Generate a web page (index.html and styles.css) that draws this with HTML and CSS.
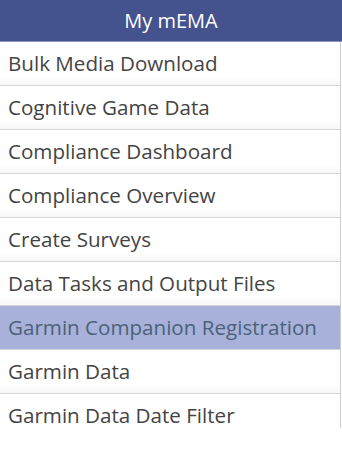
FILE: index.html
```html
<!DOCTYPE html>
<html>

<head>
    <meta charset="UTF-8">
    <meta name="viewport" content="width=device-width, initial-scale=1.0">
    <title>My mEMA</title>
    <link rel="stylesheet" href="styles.css">
</head>

<body>

    <div class="panel">
        <div class="panel-header">My mEMA</div>
        <ul class="menu">
            <li><a href="#">Bulk Media Download</a></li>
            <li><a href="#">Cognitive Game Data</a></li>
            <li><a href="#">Compliance Dashboard</a></li>
            <li><a href="#">Compliance Overview</a></li>
            <li><a href="#">Create Surveys</a></li>
            <li><a href="#">Data Tasks and Output Files</a></li>
            <li class="active"><a href="#">Garmin Companion Registration</a></li>
            <li><a href="#">Garmin Data</a></li>
            <li><a href="#">Garmin Data Date Filter</a></li>
        </ul>
    </div>

</body>

</html>
```

FILE: styles.css
```css
body {
    margin: 0;
    background-color: #fff;
    font-family: "Open Sans", Arial, sans-serif;
}

.panel {
    width: 342px;
}

.panel-header {
    height: 41px;
    line-height: 41px;
    background-color: #44528e;
    border-bottom: 1px solid #8b95bd;
    color: #fff;
    text-align: center;
    font-size: 20px;
}

.menu {
    list-style: none;
    margin: 0;
    padding: 0;
    width: 340px;
    height: 386px;
    overflow: hidden;
    border-right: 1px solid #cfcfcf;
}

.menu li {
    height: 43px;
    border-bottom: 1px solid #d6d6d6;
    background: linear-gradient(#ffffff 80%, #f7f7f7);
}

.menu li a {
    display: block;
    padding-left: 8px;
    line-height: 43px;
    font-size: 20.6px;
    color: #444;
    text-decoration: none;
    white-space: nowrap;
}

.menu li.active {
    background: #a7b1d9;
}

.menu li.active a {
    color: #4b6279;
}
```
